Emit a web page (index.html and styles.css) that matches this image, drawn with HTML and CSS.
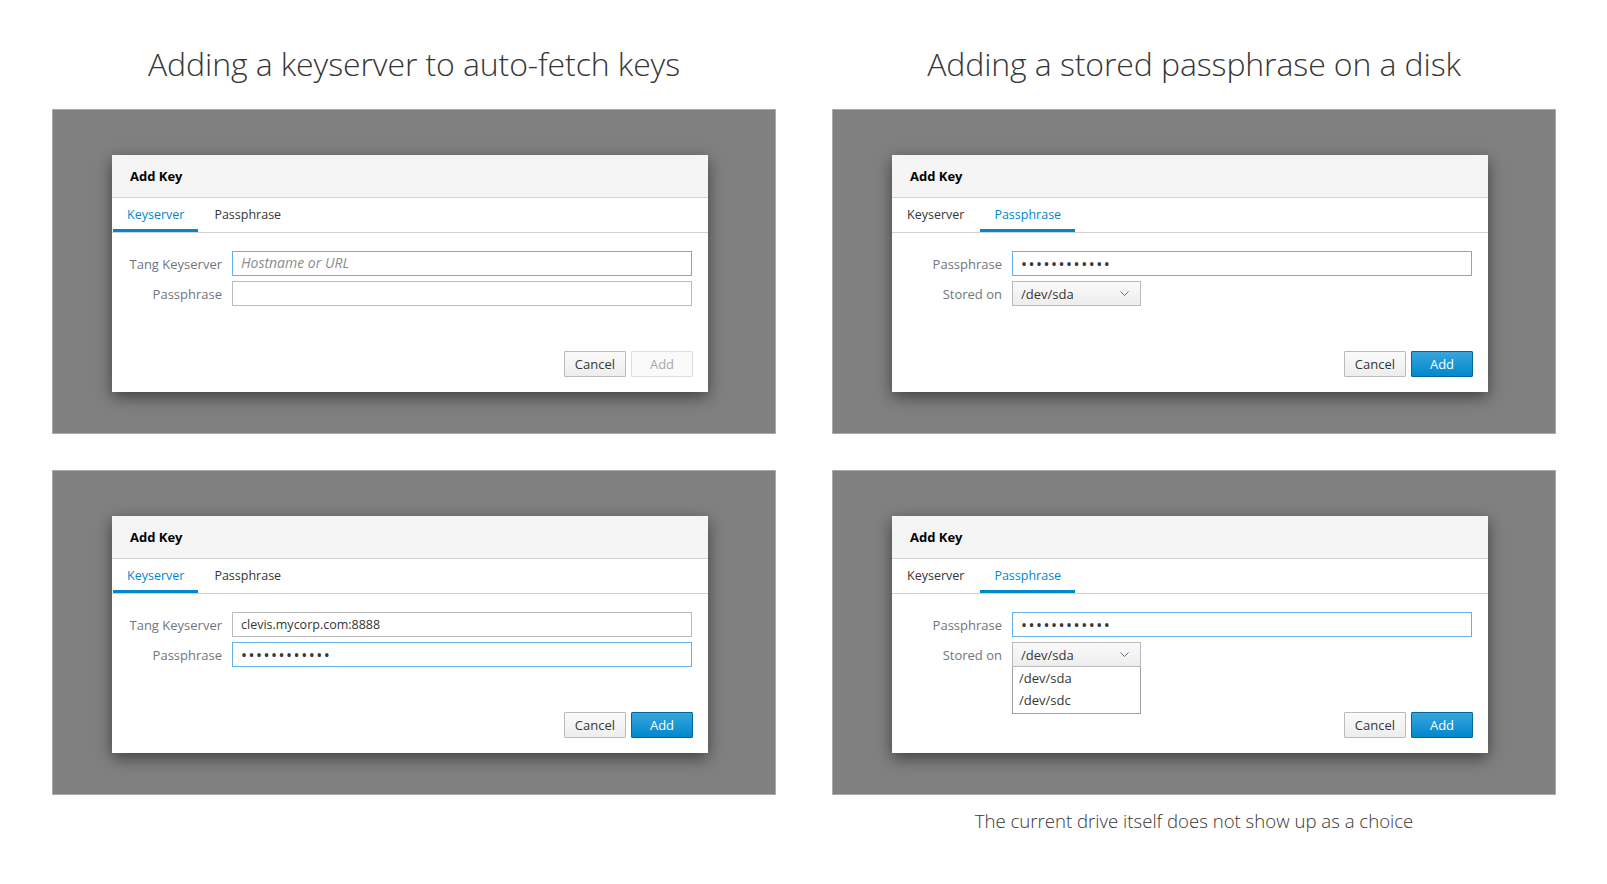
FILE: index.html
```html
<!DOCTYPE html>
<html lang="en">
<head>
<meta charset="utf-8">
<title>Add Key mockups</title>
<link rel="stylesheet" href="styles.css">
</head>
<body>
<div class="page">
  <section class="column">
    <h2 class="title">Adding a keyserver to auto-fetch keys</h2>
    <div class="stage">
      <div class="dialog">
        <div class="dialog-header">Add Key</div>
        <div class="tabs"><span class="tab active">Keyserver</span><span class="tab">Passphrase</span></div>
        <div class="dialog-body">
          <div class="form-row"><label class="label">Tang Keyserver</label><input class="input focused" type="text" placeholder="Hostname or URL"></div>
          <div class="form-row"><label class="label">Passphrase</label><input class="input" type="password"></div>
        </div>
        <div class="dialog-footer"><button class="btn">Cancel</button><button class="btn btn-disabled">Add</button></div>
      </div>
    </div>
    <div class="stage">
      <div class="dialog">
        <div class="dialog-header">Add Key</div>
        <div class="tabs"><span class="tab active">Keyserver</span><span class="tab">Passphrase</span></div>
        <div class="dialog-body">
          <div class="form-row"><label class="label">Tang Keyserver</label><input class="input" type="text" value="clevis.mycorp.com:8888"></div>
          <div class="form-row"><label class="label">Passphrase</label><input class="input focused" type="password" value="xxxxxxxxxxxx"></div>
        </div>
        <div class="dialog-footer"><button class="btn">Cancel</button><button class="btn btn-primary">Add</button></div>
      </div>
    </div>
  </section>
  <section class="column">
    <h2 class="title">Adding a stored passphrase on a disk</h2>
    <div class="stage">
      <div class="dialog">
        <div class="dialog-header">Add Key</div>
        <div class="tabs"><span class="tab">Keyserver</span><span class="tab active">Passphrase</span></div>
        <div class="dialog-body">
          <div class="form-row"><label class="label">Passphrase</label><input class="input focused" type="password" value="xxxxxxxxxxxx"></div>
          <div class="form-row"><label class="label">Stored on</label>
            <div class="select"><span>/dev/sda</span><svg class="chevron" width="9" height="5" viewBox="0 0 9 5"><path d="M0.5 0.5 L4.5 4.5 L8.5 0.5" fill="none" stroke="#6a6e73" stroke-width="1"/></svg></div>
          </div>
        </div>
        <div class="dialog-footer"><button class="btn">Cancel</button><button class="btn btn-primary">Add</button></div>
      </div>
    </div>
    <div class="stage">
      <div class="dialog">
        <div class="dialog-header">Add Key</div>
        <div class="tabs"><span class="tab">Keyserver</span><span class="tab active">Passphrase</span></div>
        <div class="dialog-body">
          <div class="form-row"><label class="label">Passphrase</label><input class="input focused" type="password" value="xxxxxxxxxxxx"></div>
          <div class="form-row"><label class="label">Stored on</label>
            <div class="select-wrap">
              <div class="select open"><span>/dev/sda</span><svg class="chevron" width="9" height="5" viewBox="0 0 9 5"><path d="M0.5 0.5 L4.5 4.5 L8.5 0.5" fill="none" stroke="#6a6e73" stroke-width="1"/></svg></div>
              <ul class="menu"><li>/dev/sda</li><li>/dev/sdc</li></ul>
            </div>
          </div>
        </div>
        <div class="dialog-footer"><button class="btn">Cancel</button><button class="btn btn-primary">Add</button></div>
      </div>
    </div>
    <p class="caption">The current drive itself does not show up as a choice</p>
  </section>
</div>
</body>
</html>
```

FILE: styles.css
```css
* { box-sizing: border-box; }
html, body { margin: 0; padding: 0; background: #ffffff; }
body { font-family: "Open Sans", "Liberation Sans", sans-serif; color: #363636; }

.page {
  display: grid;
  grid-template-columns: 724px 724px;
  column-gap: 56px;
  padding: 0 51px 0 52px;
}

.column { display: flex; flex-direction: column; }

.title {
  margin: 0;
  padding-top: 40px;
  height: 88px;
  line-height: 48px;
  font-size: 32px;
  font-weight: 300;
  letter-spacing: -0.1px;
  color: #363636;
  text-align: center;
}

.stage {
  margin-top: 21px;
  height: 325px;
  background: #808080;
  border: 1px solid #ababab;
  padding: 45px 0 0 59px;
}
.stage + .stage { margin-top: 36px; }

.dialog {
  width: 596px;
  height: 237px;
  background: #ffffff;
  box-shadow: 0 5px 15px rgba(0, 0, 0, 0.5);
  display: flex;
  flex-direction: column;
}

.dialog-header {
  height: 43px;
  background: #f5f5f5;
  border-bottom: 1px solid #d1d1d1;
  padding: 0 18px;
  display: flex;
  align-items: center;
  font-size: 13px;
  font-weight: 700;
  color: #030303;
}

.tabs {
  height: 35px;
  border-bottom: 1px solid #d1d1d1;
  padding-left: 1px;
  display: flex;
}
.tab {
  height: 34px;
  padding: 2px 14px 0;
  margin-right: 2px;
  border-bottom: 3px solid transparent;
  display: flex;
  align-items: center;
  font-size: 12.5px;
  color: #363636;
}
.tab.active { color: #0088ce; border-bottom-color: #0088ce; }

.dialog-body {
  padding-top: 18px;
  display: flex;
  flex-direction: column;
  gap: 5px;
}

.form-row {
  display: grid;
  grid-template-columns: 110px 1fr;
  column-gap: 10px;
  padding-right: 16px;
  align-items: center;
}
.label {
  text-align: right;
  font-size: 13px;
  color: #72767b;
  white-space: nowrap;
}

.input {
  height: 25px;
  width: 100%;
  border: 1px solid #bababa;
  background: #fff;
  padding: 0 8px;
  font-family: "Open Sans", "Liberation Sans", sans-serif;
  font-size: 12.5px;
  color: #363636;
  outline: none;
  border-radius: 0;
}
.input::placeholder { color: #8b8d8f; font-style: italic; font-size: 14px; }
.input.focused { border-color: #66afe9; }
.input[type="password"] { letter-spacing: 1.5px; font-size: 16px; color: #363636; }

.select-wrap { position: relative; width: 129px; }
.select {
  width: 129px;
  height: 25px;
  border: 1px solid #bababa;
  background: linear-gradient(#fafafa, #ededed);
  padding: 0 11px 0 8px;
  display: flex;
  align-items: center;
  justify-content: space-between;
  font-size: 13px;
  color: #363636;
}
.chevron { display: block; }

.menu {
  position: absolute;
  top: 25px;
  left: 0;
  width: 129px;
  margin: 0;
  padding: 0 0 2px;
  list-style: none;
  background: #fff;
  border: 1px solid #a0a0a0;
  border-top: none;
  z-index: 2;
}
.menu li {
  height: 22px;
  line-height: 22px;
  padding: 0 6px;
  font-size: 13px;
  color: #363636;
}

.dialog-footer {
  margin-top: auto;
  padding: 0 15px 15px 0;
  display: flex;
  justify-content: flex-end;
  gap: 5px;
}
.btn {
  height: 26px;
  min-width: 62px;
  padding: 0 10px;
  border: 1px solid #bbbbbb;
  background: linear-gradient(#fafafa, #ededed);
  font-family: "Open Sans", "Liberation Sans", sans-serif;
  font-size: 13px;
  color: #363636;
  border-radius: 1px;
}
.btn-disabled {
  background: #fafafa;
  border-color: #dddddd;
  color: #a8a8a8;
}
.btn-primary {
  background: linear-gradient(#39a5dc, #0088ce);
  border-color: #00659c;
  color: #ffffff;
}

.caption {
  margin: 12px 0 0;
  line-height: 28px;
  font-size: 18.6px;
  font-weight: 300;
  text-align: center;
  color: #363636;
}
```
